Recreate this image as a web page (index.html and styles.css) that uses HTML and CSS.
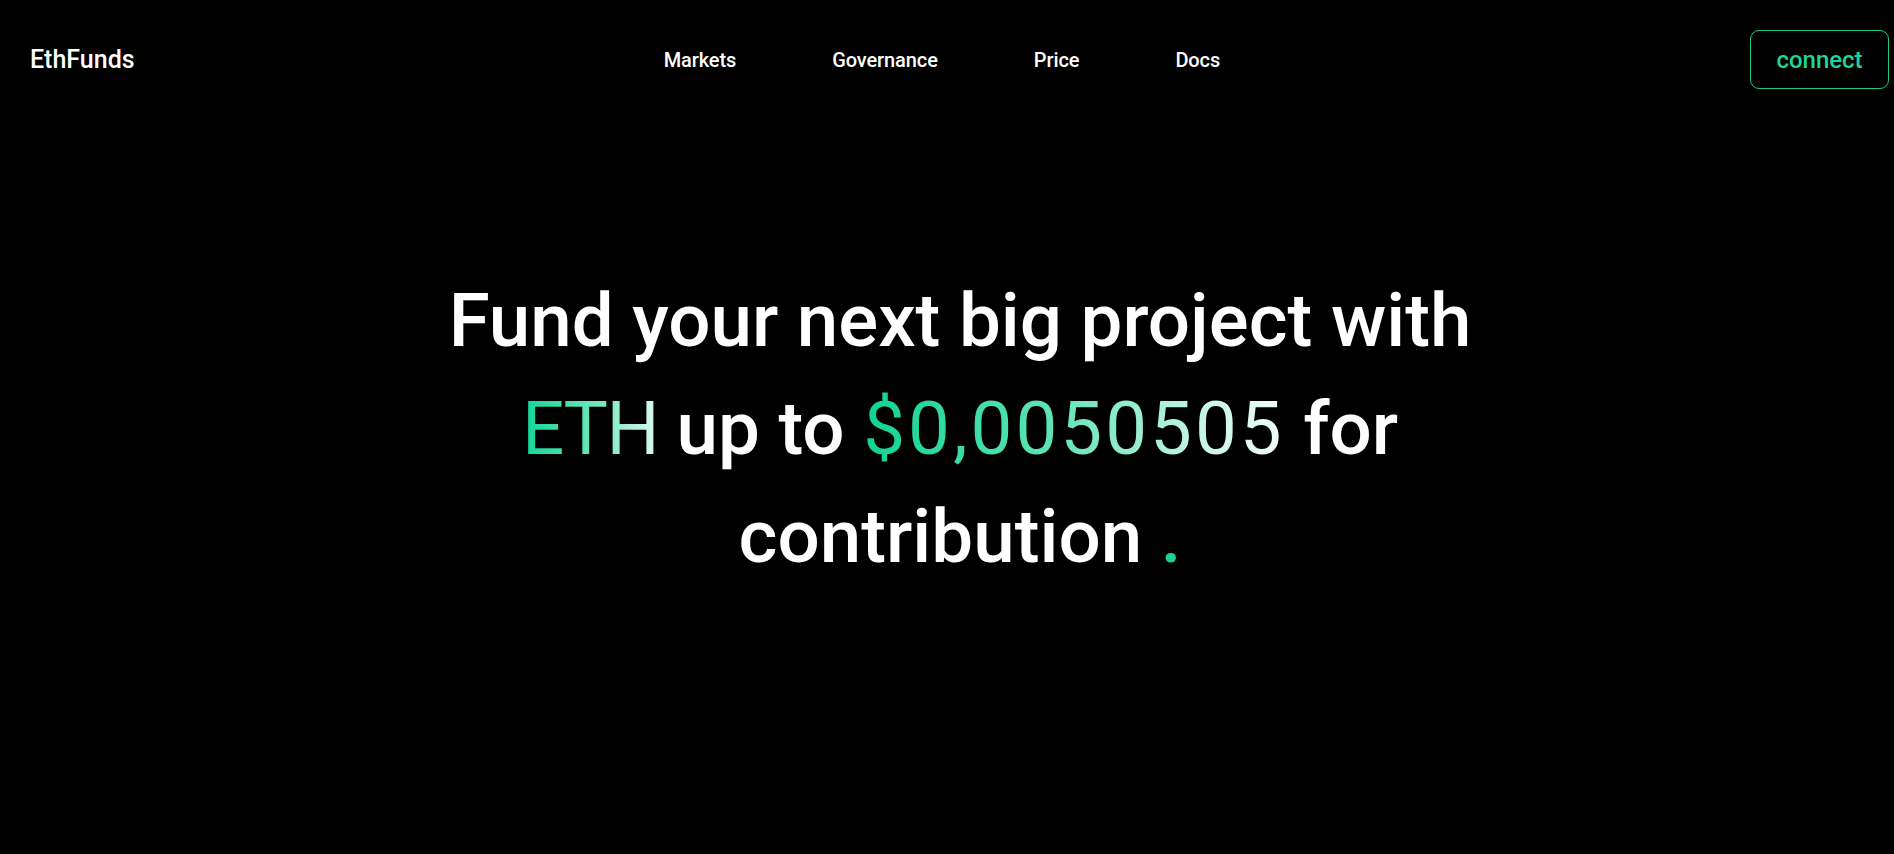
FILE: index.html
```html
<!DOCTYPE html>
<html lang="en">
<head>
<meta charset="utf-8">
<title>EthFunds</title>
<link rel="stylesheet" href="styles.css">
</head>
<body>
<header class="header">
  <div class="logo">EthFunds</div>
  <nav class="nav">
    <a class="nav-link" href="#">Markets</a>
    <a class="nav-link" href="#">Governance</a>
    <a class="nav-link" href="#">Price</a>
    <a class="nav-link" href="#">Docs</a>
  </nav>
  <button class="connect">connect</button>
</header>
<main class="hero">
  <h1 class="headline">Fund your next big project with<br><span class="grad grad-eth">ETH</span> up to <span class="grad grad-price">$0,0050505</span> for<br>contribution <span class="dot">.</span></h1>
</main>
</body>
</html>
```

FILE: styles.css
```css
* { box-sizing: border-box; }
html, body { margin: 0; padding: 0; background: #000; }
body {
  font-family: Roboto, "Liberation Sans", sans-serif;
  color: #fff;
  height: 854px;
  overflow: hidden;
}
.header {
  display: flex;
  align-items: center;
  padding: 30px 5px 0 30px;
}
.logo {
  font-size: 25px;
  font-weight: 500;
  line-height: 30px;
}
.nav {
  display: flex;
  gap: 96px;
  margin-left: 529px;
}
.nav-link {
  color: #fff;
  text-decoration: none;
  font-size: 20px;
  font-weight: 500;
  letter-spacing: -0.1px;
}
.connect {
  margin-left: auto;
  width: 139px;
  height: 59px;
  background: transparent;
  border: 1px solid #17c98d;
  border-radius: 9px;
  color: #1fd596;
  font-family: inherit;
  font-size: 24px;
  font-weight: 500;
  letter-spacing: 0;
  cursor: pointer;
}
.hero {
  padding-left: 26px;
  margin-top: 178px;
}
.headline {
  margin: 0;
  text-align: center;
  font-size: 74.5px;
  font-weight: 500;
  line-height: 108px;
}
.grad {
  font-weight: 400;
  -webkit-background-clip: text;
  background-clip: text;
  color: transparent;
}
.grad-eth {
  letter-spacing: -1.5px;
  background-image: linear-gradient(90deg, #10d596 0%, #6fe6bf 55%, #dcfaef 100%);
}
.grad-price {
  letter-spacing: 3px;
  background-image: linear-gradient(90deg, #0fd393 0%, #5fe3b8 45%, #c5f5e3 80%, #f2fdf9 100%);
}
.dot {
  color: #18d394;
}
```
